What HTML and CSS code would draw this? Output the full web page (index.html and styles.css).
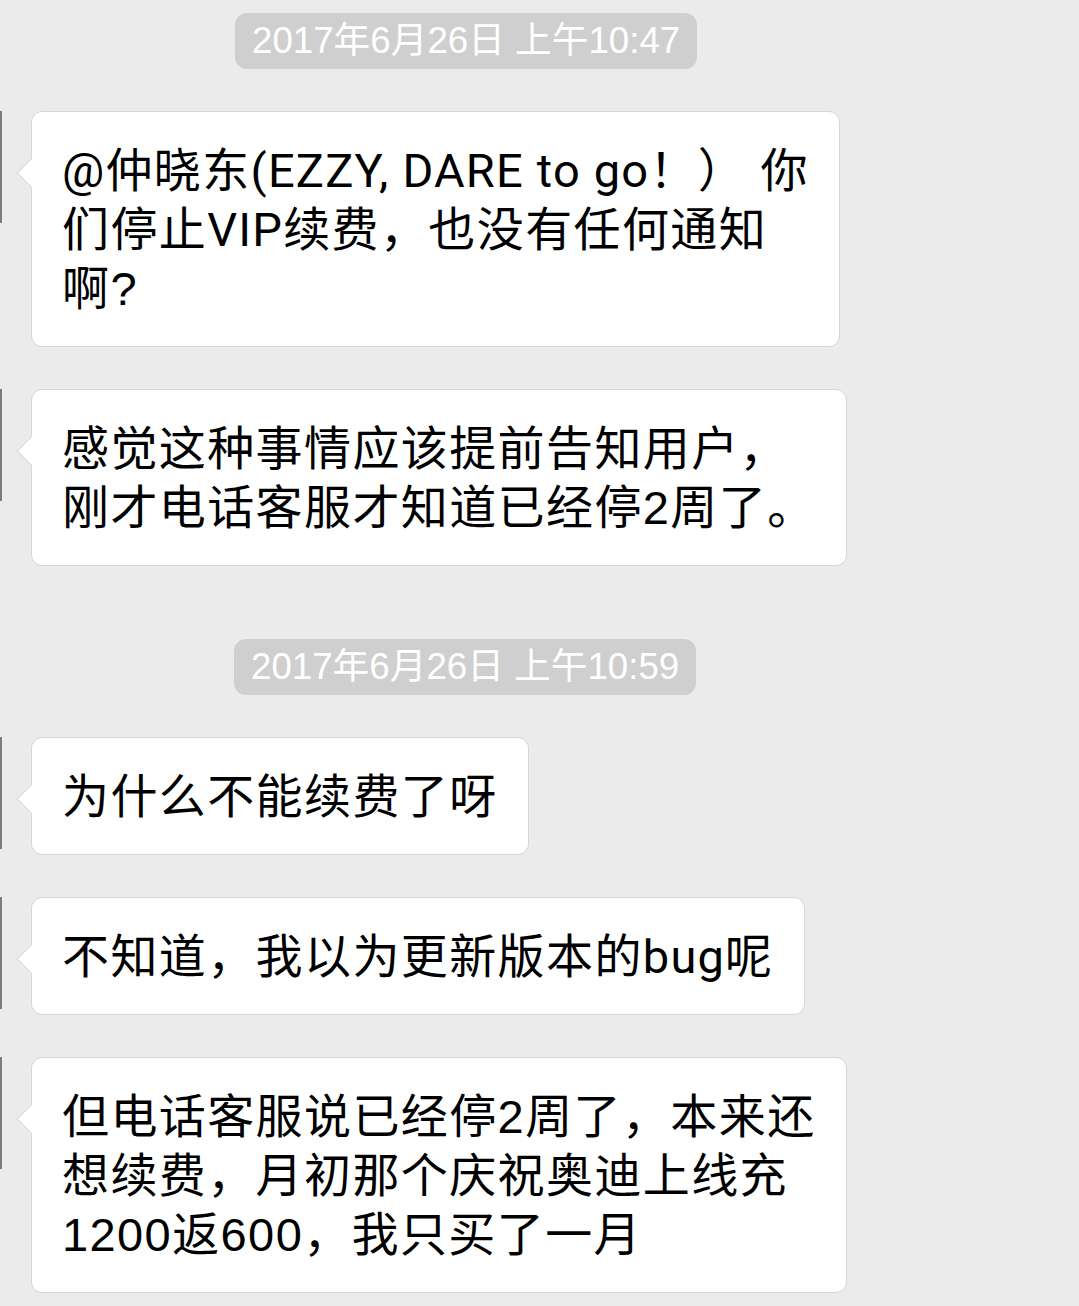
FILE: index.html
```html
<!DOCTYPE html>
<html lang="zh-CN">
<head>
<meta charset="utf-8">
<title>Chat</title>
<link rel="stylesheet" href="styles.css">
</head>
<body>
<div class="chat">
  <div class="time-row"><span class="time">2017年6月26日 上午10:47</span></div>
  <div class="msg">
    <div class="avatar"></div>
    <div class="bubble"><span class="lat">@</span>仲晓东<span class="lat">(EZZY, DARE to go</span>！） 你<br>们停止<span class="lat">VIP</span>续费，也没有任何通知<br>啊?</div>
  </div>
  <div class="msg">
    <div class="avatar"></div>
    <div class="bubble">感觉这种事情应该提前告知用户，<br>刚才电话客服才知道已经停2周了。</div>
  </div>
  <div class="time-row later"><span class="time">2017年6月26日 上午10:59</span></div>
  <div class="msg">
    <div class="avatar"></div>
    <div class="bubble">为什么不能续费了呀</div>
  </div>
  <div class="msg">
    <div class="avatar"></div>
    <div class="bubble">不知道，我以为更新版本的<span class="lat">bug</span>呢</div>
  </div>
  <div class="msg">
    <div class="avatar"></div>
    <div class="bubble">但电话客服说已经停2周了，本来还<br>想续费，月初那个庆祝奥迪上线充<br>1200返600，我只买了一月</div>
  </div>
</div>
</body>
</html>
```

FILE: styles.css
```css
* { box-sizing: border-box; }
html, body {
  margin: 0;
  padding: 0;
  background: #ebebeb;
}
body {
  font-family: "Liberation Sans", "Noto Sans CJK SC", sans-serif;
  color: #000;
  overflow: hidden;
}
.chat {
  display: flex;
  flex-direction: column;
  gap: 42px;
  padding-top: 13px;
}
.time-row {
  display: flex;
  padding-left: 235px;
}
.time-row.later {
  margin-top: 31px;
  padding-left: 234px;
}
.time {
  display: inline-block;
  background: #cfcfcf;
  color: #fff;
  font-family: "Liberation Sans", "Noto Sans CJK SC", sans-serif;
  font-size: 36.7px;
  line-height: 56px;
  height: 56px;
  padding: 0 17px;
  border-radius: 12px;
  white-space: nowrap;
}
.msg {
  display: flex;
  align-items: flex-start;
}
.avatar {
  width: 2px;
  height: 112px;
  background: #7c7c7c;
  flex: none;
}
.bubble {
  position: relative;
  margin-left: 29px;
  background: #fff;
  border: 1px solid #d6d6d6;
  border-radius: 11px;
  padding: 29px 30px 28px 30px;
  font-size: 47px;
  line-height: 59px;
  letter-spacing: 1.4px;
  white-space: nowrap;
}
.lat {
  font-family: Roboto, "Liberation Sans", sans-serif;
  letter-spacing: 1.2px;
}
.bubble::before {
  content: "";
  position: absolute;
  left: -11px;
  top: 50px;
  width: 21px;
  height: 21px;
  background: #fff;
  border-left: 1px solid #d6d6d6;
  border-bottom: 1px solid #d6d6d6;
  transform: rotate(45deg);
}
```
